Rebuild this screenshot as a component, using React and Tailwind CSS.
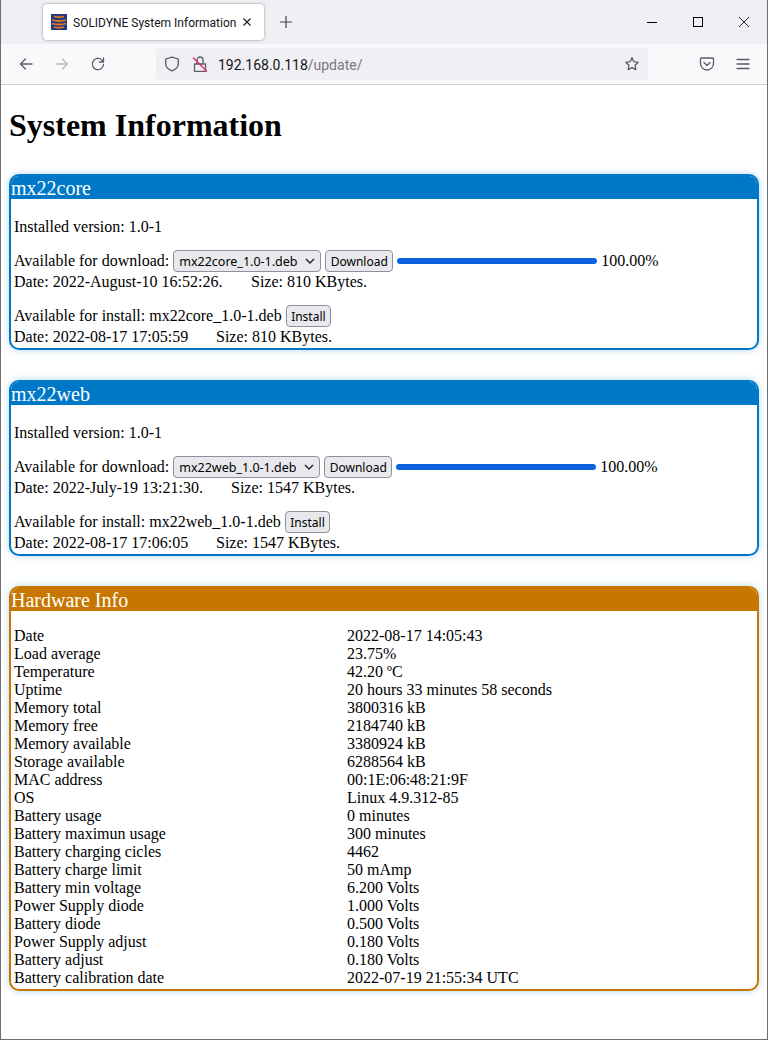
import React from 'react';

const hardware = [
  ['Date', '2022-08-17 14:05:43'],
  ['Load average', '23.75%'],
  ['Temperature', '42.20 ºC'],
  ['Uptime', '20 hours 33 minutes 58 seconds'],
  ['Memory total', '3800316 kB'],
  ['Memory free', '2184740 kB'],
  ['Memory available', '3380924 kB'],
  ['Storage available', '6288564 kB'],
  ['MAC address', '00:1E:06:48:21:9F'],
  ['OS', 'Linux 4.9.312-85'],
  ['Battery usage', '0 minutes'],
  ['Battery maximun usage', '300 minutes'],
  ['Battery charging cicles', '4462'],
  ['Battery charge limit', '50 mAmp'],
  ['Battery min voltage', '6.200 Volts'],
  ['Power Supply diode', '1.000 Volts'],
  ['Battery diode', '0.500 Volts'],
  ['Power Supply adjust', '0.180 Volts'],
  ['Battery adjust', '0.180 Volts'],
  ['Battery calibration date', '2022-07-19 21:55:34 UTC'],
];

const packages = [
  {
    name: 'mx22core',
    version: '1.0-1',
    file: 'mx22core_1.0-1.deb',
    dlDate: '2022-August-10 16:52:26.',
    dlSize: '810',
    dlDateW: 'w-[237px]',
    date: '2022-08-17 17:05:59',
    size: '810',
    selectW: 'w-[148px]',
  },
  {
    name: 'mx22web',
    version: '1.0-1',
    file: 'mx22web_1.0-1.deb',
    dlDate: '2022-July-19 13:21:30.',
    dlSize: '1547',
    dlDateW: 'w-[217px]',
    date: '2022-08-17 17:06:05',
    size: '1547',
    selectW: 'w-[147px]',
  },
];

const FormButton = ({ children }) => (
  <button className="h-[22px] px-[4.5px] pt-px mx-[4px] rounded-[4px] border border-[#8f8f9d] bg-[#e9e9ed] text-black text-[12px] leading-none font-['Noto_Sans',sans-serif]">
    {children}
  </button>
);

const Card = ({ title, borderColor, headColor, glow, children }) => (
  <section className={`border-2 rounded-[10px] overflow-hidden bg-white ${borderColor} ${glow}`}>
    <div className={`h-[23px] text-white text-[20px] leading-[25px] ${headColor}`}>
      {title}
    </div>
    {children}
  </section>
);

const PackageCard = ({ pkg }) => (
  <Card title={pkg.name} borderColor="border-[#0078c8]" headColor="bg-[#0078c8]" glow="shadow-[0_0_7px_rgba(0,120,200,0.3)]">
    <div className="pl-[3px] pt-[19px] pb-[2px]">
      <div>Installed version: {pkg.version}</div>
      <div className="flex items-center h-[22px] mt-[14px]">
        <span>Available for download:</span>
        <div className={`flex items-center justify-between h-[22px] ml-[4px] pl-[5px] pr-[5px] rounded-[4px] border border-[#8f8f9d] bg-[#e9e9ed] text-[12.5px] font-['Noto_Sans',sans-serif] ${pkg.selectW}`}>
          <span className="pt-px">{pkg.file}</span>
          <svg width="10" height="6" viewBox="0 0 10 6" fill="none" stroke="#222" strokeWidth="1.4">
            <path d="M1 1l4 4 4-4" />
          </svg>
        </div>
        <FormButton>Download</FormButton>
        <div className="w-[200px] h-[6px] rounded-full bg-[#0a62e0]" />
        <span className="ml-[4px]">100.00%</span>
      </div>
      <div className="flex mt-px">
        <span className={pkg.dlDateW}>Date: {pkg.dlDate}</span>
        <span>Size: {pkg.dlSize} KBytes.</span>
      </div>
      <div className="flex items-center h-[22px] mt-[14px]">
        <span>Available for install: {pkg.file}</span>
        <FormButton>Install</FormButton>
      </div>
      <div className="flex mt-px">
        <span className="w-[202px]">Date: {pkg.date}</span>
        <span>Size: {pkg.size} KBytes.</span>
      </div>
    </div>
  </Card>
);

const Icon = ({ children, size = 16, className = '' }) => (
  <svg width={size} height={size} viewBox="0 0 16 16" fill="none" stroke="#5b5b66" strokeWidth="1.3" strokeLinecap="round" strokeLinejoin="round" className={className}>
    {children}
  </svg>
);

const BrowserChrome = () => (
  <header className="font-['Roboto',sans-serif] text-[#15141a]">
    <div className="flex h-11 bg-[#f0f0f4] pt-[4px]">
      <div className="ml-[42px] w-[221px] h-9 flex items-center pl-2 rounded-[4px] bg-white shadow-[0_0_3px_rgba(0,0,0,0.4)]">
        <svg width="16" height="16" viewBox="0 0 16 16">
          <rect width="16" height="16" fill="#26397f" />
          <path d="M3 2.500q5 1.500 10 0M1 6q7 2 14 0M1 9.500q7 2 14 0M3 13q5 1.500 10 0" stroke="#e07a28" strokeWidth="1.800" fill="none" />
        </svg>
        <span className="ml-[6px] w-[162px] text-[12px] leading-none whitespace-nowrap relative top-px">SOLIDYNE System Information</span>
        <svg width="10" height="10" viewBox="0 0 10 10" stroke="#222" strokeWidth="1.2" className="ml-[7px]">
          <path d="M1.500 1.500l7 7M8.500 1.500l-7 7" />
        </svg>
      </div>
      <div className="ml-[16px] h-9 flex items-center">
        <svg width="12" height="12" viewBox="0 0 12 12" stroke="#444" strokeWidth="1.2">
          <path d="M6 0v12M0 6h12" />
        </svg>
      </div>
      <div className="ml-auto flex h-9 items-center">
        <div className="w-[10px] h-px bg-black mr-[36px]" />
        <div className="w-[10px] h-[10px] border border-black mr-[36px]" />
        <svg width="10" height="10" viewBox="0 0 10 10" stroke="#111" strokeWidth="0.9" className="mr-[18px]">
          <path d="M0 0l10 10M10 0l-10 10" />
        </svg>
      </div>
    </div>
    <div className="flex items-center h-[41px] bg-[#f9f9fb] border-b border-[#cfcfd8]">
      <Icon className="ml-[17px]"><path d="M14 8H2.500M7.500 3l-5 5 5 5" /></Icon>
      <svg width="16" height="16" viewBox="0 0 16 16" fill="none" stroke="#b9b9bf" strokeWidth="1.3" strokeLinecap="round" strokeLinejoin="round" className="ml-[20px]">
        <path d="M2 8h11.500M8.500 3l5 5-5 5" />
      </svg>
      <Icon className="ml-[20px]"><path d="M13.500 8.500a5.600 5.600 0 1 1-1.600-4.400L13.500 6M13.500 2v4h-4" /></Icon>
      <div className="ml-[50px] w-[492px] h-8 flex items-center rounded-[4px] bg-[#f0f0f4]">
        <Icon className="ml-2"><path d="M8 1.200l6.300 1.800v4.400c0 3.700-2.700 6-6.300 7.400-3.600-1.400-6.300-3.700-6.300-7.400V3z" /></Icon>
        <svg width="16" height="16" viewBox="0 0 16 16" fill="none" className="ml-[12px]">
          <path d="M5 8V4a3 3 0 0 1 6 0v4M2.500 8h11v7.300h-11z" stroke="#5b5b66" strokeWidth="1.300" strokeLinejoin="round" />
          <path d="M1 1.500l14 14" stroke="#e22850" strokeWidth="1.300" />
        </svg>
        <span className="ml-[10px] text-[14px] leading-none relative top-px">
          192.168.0.118<span className="text-[#77777f]">/update/</span>
        </span>
        <Icon className="ml-auto mr-2"><path d="M8 1.800l1.900 3.900 4.300.6-3.100 3 .7 4.300L8 11.600l-3.800 2 .7-4.300-3.100-3 4.300-.6z" /></Icon>
      </div>
      <Icon className="ml-[51px]"><path d="M2.500 2h11a1 1 0 0 1 1 1v4.500a6.500 6.500 0 0 1-13 0V3a1 1 0 0 1 1-1zM5 6.500l3 3 3-3" /></Icon>
      <Icon className="ml-[20px]"><path d="M2 3.500h12M2 8h12M2 12.500h12" /></Icon>
    </div>
  </header>
);

export default function App() {
  return (
    <div className="w-[768px] h-[1040px] overflow-hidden bg-white text-black text-[16px] leading-[18px] border-x border-b border-[#6e6e6e] font-['Liberation_Serif',serif]">
      <BrowserChrome />
      <main className="px-2">
        <h1 className="text-[32px] leading-[36px] font-bold mt-[22px] mb-[31px]">System Information</h1>
        <div className="flex flex-col gap-[30px]">
          {packages.map(pkg => (
            <PackageCard key={pkg.name} pkg={pkg} />
          ))}
          <Card title="Hardware Info" borderColor="border-[#c77700]" headColor="bg-[#c77700]" glow="shadow-[0_0_7px_rgba(0,120,200,0.3)]">
            <div className="grid grid-cols-[333px_1fr] pl-[3px] pt-[16px] pb-[2px]">
              {hardware.map(([label, value]) => (
                <React.Fragment key={label}>
                  <div>{label}</div>
                  <div>{value}</div>
                </React.Fragment>
              ))}
            </div>
          </Card>
        </div>
      </main>
    </div>
  );
}
